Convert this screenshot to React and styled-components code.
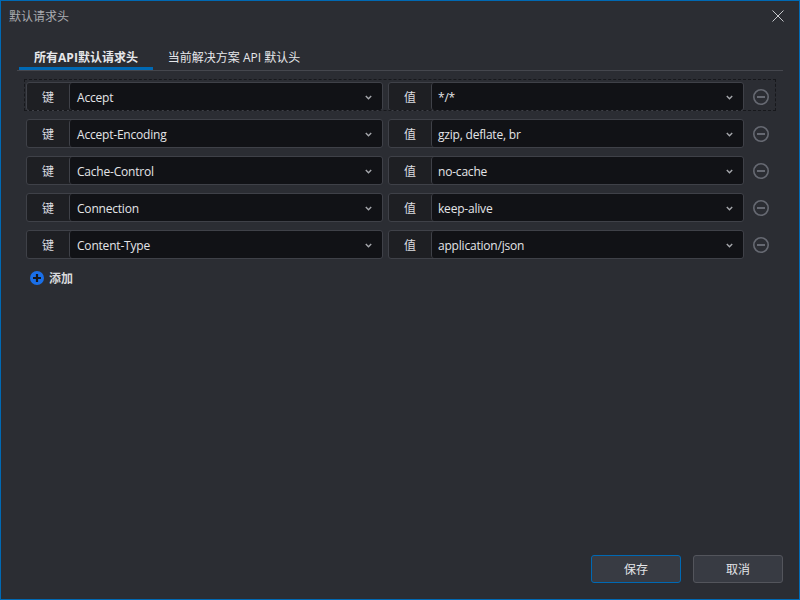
import React from 'react';
import styled, { createGlobalStyle } from 'styled-components';

const GlobalStyle = createGlobalStyle`
  html, body {
    margin: 0;
    padding: 0;
    background: #2b2d33;
  }
  #root {
    width: 800px;
    height: 600px;
  }
`;

const Window = styled.div`
  box-sizing: border-box;
  width: 800px;
  height: 600px;
  display: flex;
  flex-direction: column;
  background: #2b2d33;
  border: 1px solid #0069b4;
  font-family: "Open Sans", "Noto Sans CJK SC", sans-serif;
  font-size: 12px;
  color: #e2e3e6;
`;

const TitleBar = styled.div`
  display: flex;
  align-items: center;
  justify-content: space-between;
  height: 30px;
  padding: 0 15px 0 8px;
  color: #a9abb0;
  font-size: 12px;
`;

const CloseButton = styled.div`
  display: flex;
  width: 12px;
  height: 12px;
  color: #c6c8cc;
`;

const Body = styled.div`
  flex: 1;
  display: flex;
  flex-direction: column;
  padding: 12px 16px 0 16px;
`;

const Tabs = styled.div`
  display: flex;
  height: 27px;
  border-bottom: 1px solid #45474e;
`;

const Tab = styled.div`
  box-sizing: border-box;
  width: ${(p) => p.$width}px;
  margin-left: ${(p) => (p.$active ? 2 : 0)}px;
  height: 27px;
  padding-top: 5px;
  text-align: center;
  font-weight: ${(p) => (p.$active ? 700 : 400)};
  color: #e6e7ea;
  border-bottom: 3px solid ${(p) => (p.$active ? '#0069b4' : 'transparent')};
`;

const Rows = styled.div`
  display: flex;
  flex-direction: column;
  gap: 8px;
  margin-top: 11px;
  padding-left: 8px;
`;

const Row = styled.div`
  position: relative;
  display: flex;
  align-items: center;
  height: 29px;
  width: 752px;
  margin-left: 1px;
  &::before {
    content: '';
    display: ${(p) => (p.$focused ? 'block' : 'none')};
    position: absolute;
    left: -2px;
    top: -3px;
    width: 750px;
    height: 30px;
    border: 1px dashed #17181c;
    pointer-events: none;
  }
`;

const FieldGroup = styled.div`
  box-sizing: border-box;
  display: flex;
  width: ${(p) => p.$width}px;
  height: 29px;
  margin-right: ${(p) => p.$gap}px;
  background: #1e1f23;
  border: 1px solid #3f4148;
  border-radius: 3px;
`;

const FieldLabel = styled.div`
  flex: 0 0 42px;
  display: flex;
  align-items: center;
  justify-content: center;
  padding-top: 1px;
  color: #dcdde0;
`;

const Select = styled.div`
  flex: 1;
  display: flex;
  align-items: center;
  justify-content: space-between;
  padding: 1px 10px 0 ${(p) => p.$indent}px;
  background: #111216;
  border-left: 1px solid #3f4148;
  border-radius: 3px;
  color: #e4e5e8;
  letter-spacing: -0.2px;
`;

const Chevron = styled.svg`
  width: 7px;
  height: 5px;
  color: #a5a7ac;
`;

const RemoveIcon = styled.svg`
  width: 16px;
  height: 16px;
  margin: 1px 0 0 9px;
  color: #666972;
`;

const AddRow = styled.div`
  display: flex;
  align-items: center;
  gap: 5px;
  margin: 10px 0 0 13px;
  font-weight: 700;
  color: #d8d9dc;
`;

const AddIcon = styled.svg`
  width: 14px;
  height: 14px;
`;

const Footer = styled.div`
  display: flex;
  justify-content: flex-end;
  gap: 12px;
  margin-top: auto;
  padding-bottom: 16px;
`;

const Button = styled.div`
  box-sizing: border-box;
  width: 90px;
  height: 28px;
  display: flex;
  align-items: center;
  justify-content: center;
  background: #383b43;
  border: 1px solid ${(p) => (p.$primary ? '#0069b4' : '#53555c')};
  border-radius: 3px;
  color: #e4e5e8;
`;

const headers = [
  ['Accept', '*/*'],
  ['Accept-Encoding', 'gzip, deflate, br'],
  ['Cache-Control', 'no-cache'],
  ['Connection', 'keep-alive'],
  ['Content-Type', 'application/json'],
];

const Arrow = () => (
  <Chevron viewBox="0 0 7 5" fill="none" stroke="currentColor" strokeWidth="1.4">
    <path d="M0.8 1 L3.5 3.8 L6.2 1" />
  </Chevron>
);

const Field = ({ label, value, width, indent, gap }) => (
  <FieldGroup $width={width} $gap={gap}>
    <FieldLabel>{label}</FieldLabel>
    <Select $indent={indent}>
      <span>{value}</span>
      <Arrow />
    </Select>
  </FieldGroup>
);

const App = () => (
  <Window>
    <GlobalStyle />
    <TitleBar>
      <span>默认请求头</span>
      <CloseButton>
        <svg width="12" height="12" viewBox="0 0 12 12" stroke="currentColor" fill="none">
          <path d="M0.5 0.5 L11.5 11.5 M11.5 0.5 L0.5 11.5" />
        </svg>
      </CloseButton>
    </TitleBar>
    <Body>
      <Tabs>
        <Tab $active $width={134}>所有API默认请求头</Tab>
        <Tab $width={162}>当前解决方案 API 默认头</Tab>
      </Tabs>
      <Rows>
        {headers.map(([key, value], i) => (
          <Row key={key} $focused={i === 0}>
            <Field label="键" value={key} width={357} indent={7} gap={5} />
            <Field label="值" value={value} width={356} indent={6} gap={0} />
            <RemoveIcon viewBox="0 0 16 16" fill="none" stroke="currentColor">
              <circle cx="8" cy="8" r="7.2" strokeWidth="1.6" />
              <path d="M4 8 H12" strokeWidth="2" />
            </RemoveIcon>
          </Row>
        ))}
      </Rows>
      <AddRow>
        <AddIcon viewBox="0 0 14 14">
          <circle cx="7" cy="7" r="7" fill="#1a6fe8" />
          <path d="M3 7 H11 M7 3 V11" stroke="#16181d" strokeWidth="2.2" />
        </AddIcon>
        添加
      </AddRow>
      <Footer>
        <Button $primary>保存</Button>
        <Button>取消</Button>
      </Footer>
    </Body>
  </Window>
);

export default App;
